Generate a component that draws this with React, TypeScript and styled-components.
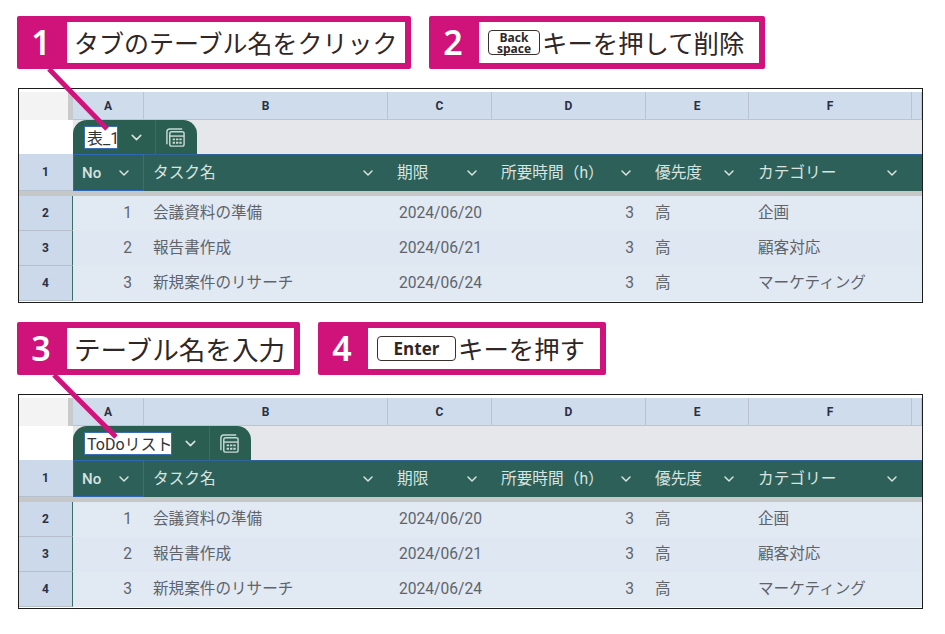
import React from "react";
import styled, { createGlobalStyle } from "styled-components";
import { ChevronDown } from "lucide-react";

const columns = [
  { key: "A", label: "No" },
  { key: "B", label: "タスク名" },
  { key: "C", label: "期限" },
  { key: "D", label: "所要時間（h）" },
  { key: "E", label: "優先度" },
  { key: "F", label: "カテゴリー" },
];

const rows = [
  { n: 2, no: 1, name: "会議資料の準備", date: "2024/06/20", hours: 3, level: "高", category: "企画" },
  { n: 3, no: 2, name: "報告書作成", date: "2024/06/21", hours: 3, level: "高", category: "顧客対応" },
  { n: 4, no: 3, name: "新規案件のリサーチ", date: "2024/06/24", hours: 3, level: "高", category: "マーケティング" },
];

const CalcIcon = () => (
  <svg width="21" height="21" viewBox="0 0 22 22" fill="none" stroke="#c9d8d3" strokeWidth="1.5">
    <path d="M2 18V5a3 3 0 0 1 3-3h13" />
    <rect x="5" y="5" width="15" height="15" rx="2" />
    <path d="M5 9.5h15" />
    <path d="M8 13h2.5M11.5 13h2.5M15 13h2.5M8 16.5h2.5M11.5 16.5h2.5M15 16.5h2.5" strokeWidth="2" />
  </svg>
);

const Sheet = ({ tabName, tabWidth }: { tabName: string; tabWidth: number }) => (
  <SheetFrame>
    <ColumnHeads>
      <Corner />
      {columns.map((c) => (
        <ColumnHead key={c.key}>{c.key}</ColumnHead>
      ))}
      <ColumnHead />
    </ColumnHeads>
    <TabRow>
      <TabGap />
      <TabBand>
        <Tab>
          <NameBox $width={tabWidth}>
            {tabName}
            <Caret />
          </NameBox>
          <TabChevron>
            <ChevronDown size={17} strokeWidth={2.2} />
          </TabChevron>
          <TabIcon>
            <CalcIcon />
          </TabIcon>
        </Tab>
      </TabBand>
    </TabRow>
    <HeaderRow>
      <RowHead $top>1</RowHead>
      {columns.map((c) => (
        <HeaderCell key={c.key} $selected={c.key === "A"}>
          <HeaderLabel $latin={c.key === "A"}>{c.label}</HeaderLabel>
          <ChevronDown size={16} strokeWidth={2.2} />
        </HeaderCell>
      ))}
      <HeaderCell />
    </HeaderRow>
    <Strip />
    {rows.map((r) => (
      <BodyRow key={r.n} $even={r.n % 2 === 0}>
        <RowHead>{r.n}</RowHead>
        <Cell $right>{r.no}</Cell>
        <Cell>{r.name}</Cell>
        <Cell $wide>{r.date}</Cell>
        <Cell $right>{r.hours}</Cell>
        <Cell>{r.level}</Cell>
        <Cell>{r.category}</Cell>
        <Cell />
      </BodyRow>
    ))}
  </SheetFrame>
);

export default function App() {
  return (
    <>
      <GlobalStyle />
      <Page>
        <Section>
          <Callouts>
            <Callout>
              <Num>1</Num>
              <CalloutText $width={338} $size={25}>タブのテーブル名をクリック</CalloutText>
            </Callout>
            <Callout>
              <Num>2</Num>
              <CalloutText $width={280} $size={25.4}>
                <BackKey>
                  <span>Back</span>
                  <span>space</span>
                </BackKey>
                キーを押して削除
              </CalloutText>
            </Callout>
          </Callouts>
          <Sheet tabName="表_1" tabWidth={34} />
          <Leader viewBox="0 0 120 70">
            <line x1="49" y1="0" x2="107" y2="60" stroke="#d0137a" strokeWidth="5" />
          </Leader>
        </Section>
        <Section>
          <Callouts>
            <Callout>
              <Num>3</Num>
              <CalloutText $width={227} $size={26.6}>テーブル名を入力</CalloutText>
            </Callout>
            <Callout>
              <Num>4</Num>
              <CalloutText $width={232} $size={25.4}>
                <EnterKey>Enter</EnterKey>
                キーを押す
              </CalloutText>
            </Callout>
          </Callouts>
          <Sheet tabName="ToDoリスト" tabWidth={88} />
          <Leader viewBox="0 0 120 70">
            <line x1="54" y1="0" x2="116" y2="62" stroke="#d0137a" strokeWidth="5" />
          </Leader>
        </Section>
      </Page>
    </>
  );
}

const GlobalStyle = createGlobalStyle`
  body {
    margin: 0;
    background: #fff;
    font-family: "Noto Sans CJK JP", sans-serif;
  }
`;

const Page = styled.div`
  width: 945px;
  height: 634px;
  padding: 16px 0 0 17px;
  box-sizing: border-box;
  display: flex;
  flex-direction: column;
  gap: 19px;
  overflow: hidden;
`;

const Section = styled.section`
  position: relative;
  display: flex;
  flex-direction: column;
  gap: 19px;
`;

const Callouts = styled.div`
  display: flex;
  gap: 18px;
`;

const Callout = styled.div`
  display: flex;
  height: 53px;
  box-sizing: border-box;
  padding: 6px 6px 6px 0;
  background: #d0137a;
  border-radius: 2px;
`;

const Num = styled.div`
  width: 48px;
  padding-right: 2px;
  text-align: center;
  color: #fff;
  font-family: "Noto Sans", sans-serif;
  font-size: 34px;
  font-weight: 600;
  line-height: 41px;
`;

const CalloutText = styled.div<{ $width: number; $size: number }>`
  width: ${(p) => p.$width}px;
  box-sizing: border-box;
  padding-left: 7px;
  background: #fff;
  color: #2f2725;
  display: flex;
  align-items: center;
  font-size: ${(p) => p.$size}px;
  line-height: 41px;
  white-space: nowrap;
`;

const KeyCap = styled.span`
  display: inline-flex;
  box-sizing: border-box;
  height: 25px;
  border: 1px solid #3a302c;
  border-radius: 4px;
  color: #2f2725;
  font-family: "Open Sans", sans-serif;
  font-weight: 700;
`;

const BackKey = styled(KeyCap)`
  width: 52px;
  margin: 0 2px 0 2px;
  flex-direction: column;
  align-items: center;
  justify-content: center;
  font-size: 12px;
  line-height: 11px;
`;

const EnterKey = styled(KeyCap)`
  width: 79px;
  margin: 0 2px 0 2px;
  align-items: center;
  justify-content: center;
  font-size: 17px;
`;

const Leader = styled.svg`
  position: absolute;
  left: -17px;
  top: 53px;
  width: 120px;
  height: 70px;
  pointer-events: none;
`;

const SheetFrame = styled.div`
  width: 905px;
  height: 215px;
  margin-left: 1px;
  box-sizing: border-box;
  border: 1px solid #1c1c1c;
  background: #fff;
  font-family: Roboto, "Noto Sans CJK JP", sans-serif;
  overflow: hidden;
`;

const gridColumns = "54px 71px 244px 104px 154px 103px 163px 1fr";

const ColumnHeads = styled.div`
  display: grid;
  grid-template-columns: ${gridColumns};
  height: 31px;
  padding-top: 3px;
  box-sizing: border-box;
  background: #fff;
`;

const Corner = styled.div`
  background: #f3f3f4;
  border-right: 5px solid #c9cacb;
`;

const ColumnHead = styled.div`
  display: flex;
  align-items: center;
  justify-content: center;
  background: #cfdcec;
  border-right: 1px solid #b9c4d0;
  border-bottom: 1px solid #b9c4d0;
  color: #2a2f45;
  font-size: 12px;
  font-weight: 700;
`;

const TabRow = styled.div`
  display: flex;
  height: 34px;
`;

const TabGap = styled.div`
  width: 54px;
`;

const TabBand = styled.div`
  flex: 1;
  display: flex;
  align-items: flex-end;
  background: #e5e7eb;
`;

const Tab = styled.div`
  display: flex;
  align-items: center;
  height: 34px;
  padding-left: 11px;
  border-radius: 14px 14px 0 0;
  background: #2a5e50;
`;

const NameBox = styled.div<{ $width: number }>`
  display: flex;
  align-items: center;
  width: ${(p) => p.$width}px;
  height: 23px;
  box-sizing: border-box;
  padding-left: 2px;
  background: #fff;
  border: 1px solid #3a6fb5;
  color: #333;
  font-size: 16px;
  white-space: nowrap;
  overflow: hidden;
`;

const Caret = styled.span`
  width: 1px;
  height: 18px;
  margin-left: 1px;
  background: #222;
`;

const TabChevron = styled.div`
  display: flex;
  justify-content: center;
  width: 37px;
  color: #d5e2dd;
`;

const TabIcon = styled.div`
  display: flex;
  align-items: center;
  justify-content: center;
  width: 42px;
  height: 100%;
  box-sizing: border-box;
  padding-right: 3px;
  border-left: 1px solid #3c6d5f;
`;

const HeaderRow = styled.div`
  display: grid;
  grid-template-columns: ${gridColumns};
  height: 37px;
`;

const RowHead = styled.div<{ $top?: boolean }>`
  display: flex;
  align-items: center;
  justify-content: center;
  background: #cbd9ea;
  border-right: 1px solid ${(p) => (p.$top ? "#cbd9ea" : "#3d6b66")};
  border-bottom: 1px solid #b5c0cc;
  color: #2a2f45;
  font-size: 12px;
  font-weight: 700;
`;

const HeaderCell = styled.div<{ $selected?: boolean }>`
  display: flex;
  align-items: center;
  justify-content: space-between;
  padding: 0 12px 0 9px;
  background: #2d6058;
  border-top: 1px solid #2f639e;
  color: #d7e4e0;
  font-size: 15.7px;
  outline: ${(p) => (p.$selected ? "1px solid #2f68b8" : "none")};
  outline-offset: -1px;
`;

const HeaderLabel = styled.span<{ $latin?: boolean }>`
  font-size: ${(p) => (p.$latin ? "15px" : "inherit")};
  font-weight: ${(p) => (p.$latin ? 500 : 400)};
  line-height: 20px;
  white-space: nowrap;
`;

const Strip = styled.div`
  height: 5px;
  background: #c6c8c8;
`;

const BodyRow = styled.div<{ $even: boolean }>`
  display: grid;
  grid-template-columns: ${gridColumns};
  height: 35px;
  background: ${(p) => (p.$even ? "#e1e9f3" : "#dee7f2")};
`;

const Cell = styled.div<{ $right?: boolean; $wide?: boolean }>`
  display: flex;
  align-items: center;
  justify-content: ${(p) => (p.$right ? "flex-end" : "flex-start")};
  padding: 0 12px 1px ${(p) => (p.$wide ? "11px" : "9px")};
  color: #5f646b;
  font-size: 15.6px;
  line-height: 20px;
  white-space: nowrap;
`;
